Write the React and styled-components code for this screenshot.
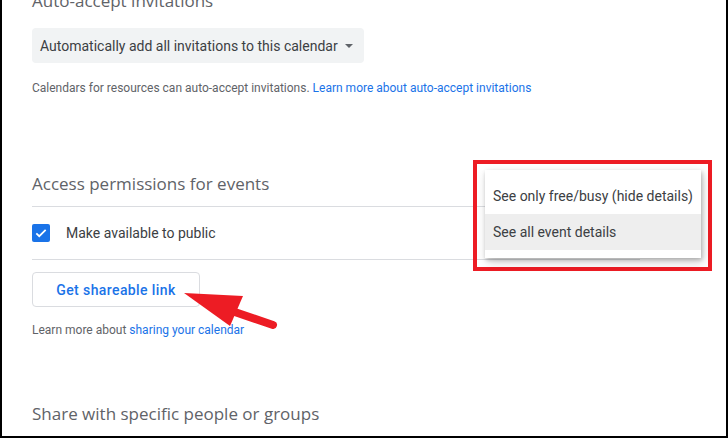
import styled, { createGlobalStyle } from 'styled-components';

const GlobalStyle = createGlobalStyle`
  html, body {
    margin: 0;
    padding: 0;
    background: #fff;
  }
  * { box-sizing: border-box; }
`;

const Frame = styled.div`
  position: relative;
  width: 728px;
  height: 438px;
  overflow: hidden;
  background: #fff;
  border-left: 2px solid #000;
  border-right: 2px solid #000;
  border-bottom: 2px solid #000;
  font-family: Roboto, 'Liberation Sans', sans-serif;
`;

const Content = styled.div`
  display: flex;
  flex-direction: column;
  align-items: flex-start;
  padding: 0 86px 0 30px;
`;

const Heading = styled.h2`
  margin: ${(p) => p.$mt || 0}px 0 0;
  font-family: 'Open Sans', Roboto, sans-serif;
  font-weight: 400;
  font-size: 17px;
  line-height: 24px;
  color: #5f6368;
`;

const Select = styled.div`
  display: flex;
  align-items: center;
  gap: 7px;
  height: 35px;
  margin-top: 15px;
  padding: 0 11px 0 8px;
  background: #f1f3f4;
  border-radius: 4px;
  font-size: 14px;
  color: #3c4043;
`;

const Caret = styled.span`
  width: 0;
  height: 0;
  border-left: 4px solid transparent;
  border-right: 4px solid transparent;
  border-top: 4px solid #5f6368;
`;

const Help = styled.p`
  margin: ${(p) => p.$mt || 0}px 0 0;
  font-size: 12px;
  line-height: 16px;
  color: #5f6368;
`;

const Link = styled.a`
  color: #1a73e8;
  text-decoration: none;
`;

const Divider = styled.div`
  align-self: stretch;
  height: 1px;
  background: #dadce0;
  margin-top: ${(p) => p.$mt || 0}px;
`;

const CheckRow = styled.label`
  display: flex;
  align-items: center;
  gap: 16px;
  height: 52px;
  font-size: 14px;
  color: #3c4043;
`;

const Box = styled.span`
  display: flex;
  align-items: center;
  justify-content: center;
  width: 18px;
  height: 18px;
  border-radius: 2px;
  background: #1a73e8;
`;

const OutlineButton = styled.button`
  margin-top: 12px;
  height: 35px;
  width: 168px;
  border: 1px solid #dadce0;
  border-radius: 4px;
  background: #fff;
  font-family: Roboto, sans-serif;
  font-weight: 500;
  font-size: 14px;
  letter-spacing: 0.4px;
  color: #1a73e8;
`;

const Highlight = styled.div`
  position: absolute;
  left: 471px;
  top: 160px;
  width: 239px;
  height: 111px;
  border: 4px solid #ed1c24;
`;

const Menu = styled.ul`
  position: absolute;
  left: 483px;
  top: 170px;
  width: 216px;
  margin: 0;
  padding: 8px 0;
  list-style: none;
  background: #fff;
  box-shadow: 1px 2px 4px rgba(0, 0, 0, 0.22), 2px 4px 10px rgba(0, 0, 0, 0.18);
`;

const MenuItem = styled.li`
  height: 36px;
  display: flex;
  align-items: center;
  padding-left: 8px;
  font-size: 14px;
  color: #3c4043;
  background: ${(p) => (p.$active ? '#eeeeee' : 'transparent')};
`;

const Arrow = styled.svg`
  position: absolute;
  left: -2px;
  top: 0;
`;

export default function App() {
  return (
    <Frame>
      <GlobalStyle />
      <Content>
        <Heading $mt={-11}>Auto-accept invitations</Heading>
        <Select>
          Automatically add all invitations to this calendar
          <Caret />
        </Select>
        <Help $mt={17}>
          Calendars for resources can auto-accept invitations.{' '}
          <Link>Learn more about auto-accept invitations</Link>
        </Help>

        <Heading $mt={76}>Access permissions for events</Heading>
        <Divider $mt={10} />
        <CheckRow>
          <Box>
            <svg width="14" height="14" viewBox="0 0 24 24">
              <path d="M4 12.5l5 5L20 6.5" fill="none" stroke="#fff" strokeWidth="3" />
            </svg>
          </Box>
          Make available to public
        </CheckRow>
        <Divider />
        <OutlineButton>Get shareable link</OutlineButton>
        <Help $mt={15}>
          Learn more about <Link>sharing your calendar</Link>
        </Help>

        <Heading $mt={64}>Share with specific people or groups</Heading>
      </Content>

      <Highlight />
      <Menu>
        <MenuItem>See only free/busy (hide details)</MenuItem>
        <MenuItem $active>See all event details</MenuItem>
      </Menu>

      <Arrow width="728" height="438" viewBox="0 0 728 438">
        <line x1="226" y1="309" x2="273" y2="325" stroke="#ed1c24" strokeWidth="8" strokeLinecap="round" />
        <polygon points="184,293 243,296 230,326" fill="#ed1c24" />
      </Arrow>
    </Frame>
  );
}
